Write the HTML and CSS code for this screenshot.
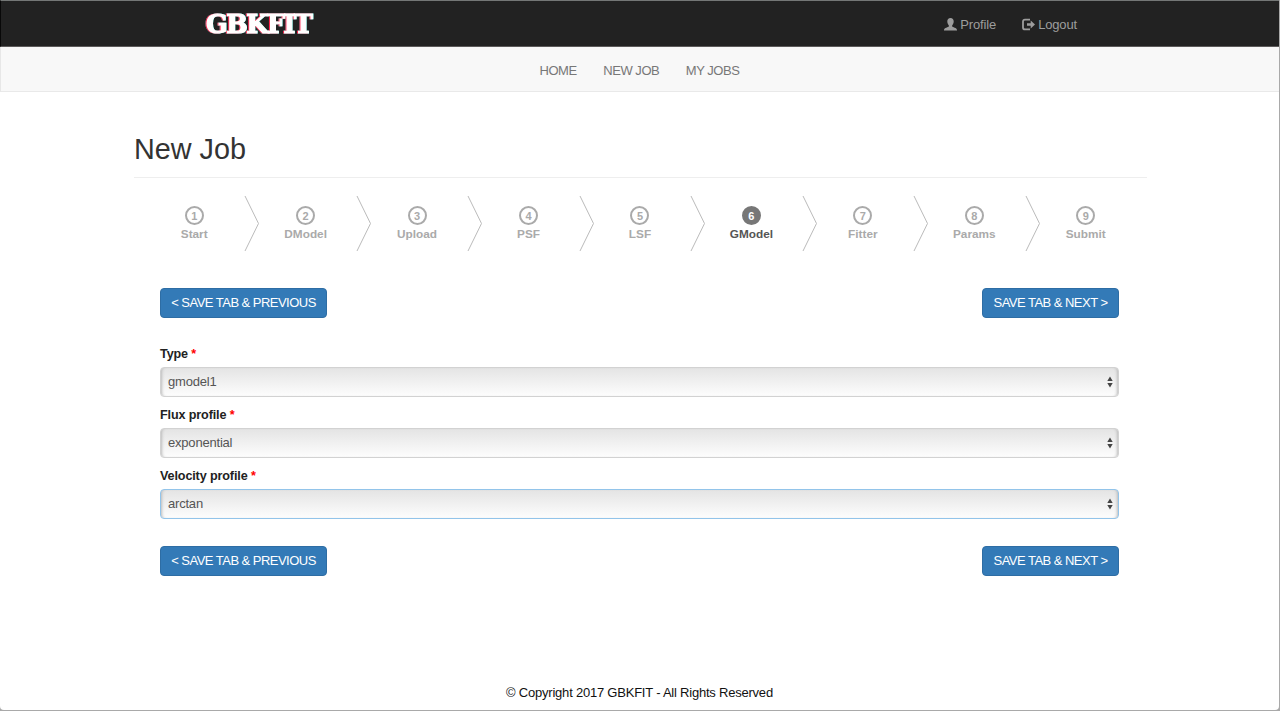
FILE: index.html
```html
<!DOCTYPE html>
<html lang="en">
<head>
<meta charset="utf-8">
<title>GBKFIT - New Job</title>
<link rel="stylesheet" href="styles.css">
</head>
<body>
<div class="page">
  <header class="topbar">
    <a class="brand">GBKFIT</a>
    <nav class="account">
      <a class="account-link"><svg class="icon" viewBox="0 0 13 13"><path d="M6.5 0C4.500 0 3.300 1.400 3.300 3.200c0 1.700.6 3.200 1.500 4.100v1.300C4.600 9.500 0 9.700 0 12V12.500h13V12c0-2.300-4.600-2.500-4.800-3.400V7.300c.9-.9 1.500-2.400 1.500-4.100C9.700 1.400 8.500 0 6.500 0z"/></svg><span class="profile-text">Profile</span></a>
      <a class="account-link"><svg class="icon" viewBox="0 0 13 13"><path d="M8 1.600H3Q1 1.600 1 3.600v5.800q0 2 2 2h5" fill="none" stroke="currentColor" stroke-width="1.800"/><path d="M5 5.300h3.700V2.600L13 6.500l-4.300 3.900V7.700H5z"/></svg><span class="logout-text">Logout</span></a>
    </nav>
  </header>
  <nav class="mainnav"><a class="nav-home">HOME</a><a class="nav-new">NEW JOB</a><a class="nav-jobs">MY JOBS</a></nav>
  <main class="content">
    <h1 class="title">New Job</h1>
    <ol class="steps">
      <li class="step"><span class="num">1</span><span>Start</span><svg class="chevron" viewBox="0 0 16 57"><path d="M1 1l13.500 27.500L1 56"/></svg></li>
      <li class="step"><span class="num">2</span><span>DModel</span><svg class="chevron" viewBox="0 0 16 57"><path d="M1 1l13.500 27.500L1 56"/></svg></li>
      <li class="step"><span class="num">3</span><span>Upload</span><svg class="chevron" viewBox="0 0 16 57"><path d="M1 1l13.500 27.500L1 56"/></svg></li>
      <li class="step"><span class="num">4</span><span>PSF</span><svg class="chevron" viewBox="0 0 16 57"><path d="M1 1l13.500 27.500L1 56"/></svg></li>
      <li class="step"><span class="num">5</span><span>LSF</span><svg class="chevron" viewBox="0 0 16 57"><path d="M1 1l13.500 27.500L1 56"/></svg></li>
      <li class="step active"><span class="num">6</span><span>GModel</span><svg class="chevron" viewBox="0 0 16 57"><path d="M1 1l13.500 27.500L1 56"/></svg></li>
      <li class="step"><span class="num">7</span><span>Fitter</span><svg class="chevron" viewBox="0 0 16 57"><path d="M1 1l13.500 27.500L1 56"/></svg></li>
      <li class="step"><span class="num">8</span><span>Params</span><svg class="chevron" viewBox="0 0 16 57"><path d="M1 1l13.500 27.500L1 56"/></svg></li>
      <li class="step"><span class="num">9</span><span>Submit</span></li>
    </ol>
    <form class="form">
      <div class="actions"><button type="button" class="btn prev">&lt; SAVE TAB &amp; PREVIOUS</button><button type="button" class="btn next">SAVE TAB &amp; NEXT &gt;</button></div>
      <div class="fields">
        <div class="field"><div class="label">Type <span class="required">*</span></div><div class="select"><span>gmodel1</span><svg class="arrows" viewBox="0 0 6 12"><path d="M3 .5L5.700 5H.3zM.3 7h5.400L3 11.500z"/></svg></div></div>
        <div class="field"><div class="label">Flux profile <span class="required">*</span></div><div class="select"><span>exponential</span><svg class="arrows" viewBox="0 0 6 12"><path d="M3 .5L5.700 5H.3zM.3 7h5.400L3 11.500z"/></svg></div></div>
        <div class="field"><div class="label">Velocity profile <span class="required">*</span></div><div class="select focused"><span>arctan</span><svg class="arrows" viewBox="0 0 6 12"><path d="M3 .5L5.700 5H.3zM.3 7h5.400L3 11.500z"/></svg></div></div>
      </div>
      <div class="actions"><button type="button" class="btn prev">&lt; SAVE TAB &amp; PREVIOUS</button><button type="button" class="btn next">SAVE TAB &amp; NEXT &gt;</button></div>
    </form>
  </main>
  <footer class="footer">© Copyright 2017 GBKFIT - All Rights Reserved</footer>
</div>
</body>
</html>
```
FILE: styles.css
```css
* { box-sizing: border-box; }
body {
  margin: 0;
  background: #a9a9a9;
  font-family: "Liberation Sans", Arial, sans-serif;
  font-size: 13px;
  line-height: 18px;
  color: #222;
}
.page {
  display: flex;
  flex-direction: column;
  width: 1279px;
  height: 710px;
  background: #fff;
  border-radius: 0 0 4px 4px;
  overflow: hidden;
}
.topbar {
  display: flex;
  align-items: center;
  justify-content: space-between;
  height: 47px;
  padding: 0 202px 0 206px;
  background: #222;
  border-top: 1px solid #747776;
  border-bottom: 1px solid #5c5a5a;
  border-left: 1px solid #080808;
  color: #9d9d9d;
}
.brand {
  padding-top: 1px;
  margin-left: -1px;
  font: bold 25.500px/45px "DejaVu Serif", serif;
  letter-spacing: -1.500px;
  color: #fff;
  -webkit-text-stroke: 1.200px #fff;
  filter: drop-shadow(-.7px 0 0 #ff1744) drop-shadow(.7px 0 0 #00e0c6);
}
.account { display: flex; gap: 26px; padding-top: 1px; }
.account-link { display: flex; align-items: center; gap: 3px; letter-spacing: -.15px; }
.icon { width: 13px; height: 13px; fill: currentColor; }
.profile-text, .logout-text { padding-top: 1px; }
.mainnav {
  display: flex;
  justify-content: center;
  gap: 26.500px;
  height: 45px;
  padding: 15px 1px 0 0;
  background: #f8f8f8;
  border-bottom: 1px solid #e9e9e9;
  border-left: 1px solid #e7e7e7;
  color: #777;
  letter-spacing: -.45px;
}
.content { width: 1013px; margin: 39px 0 0 134px; }
.title {
  margin: 0;
  height: 47px;
  font-size: 28.800px;
  line-height: 37px;
  font-weight: normal;
  color: #333;
  border-bottom: 1px solid #eee;
}
.steps {
  display: flex;
  margin: 17px 0 0;
  padding: 0 5.500px 0 4.500px;
  list-style: none;
}
.step {
  position: relative;
  flex: 1;
  display: flex;
  flex-direction: column;
  align-items: center;
  height: 57px;
  padding-top: 11px;
  font-size: 11.800px;
  line-height: 14px;
  font-weight: bold;
  color: #aaa;
}
.num {
  width: 19px;
  height: 19px;
  margin-bottom: 2px;
  border: 2px solid #aaa;
  border-radius: 50%;
  font-size: 11px;
  line-height: 16px;
  text-align: center;
}
.active { color: #555; }
.active .num { background: #777; border-color: #777; color: #fff; }
.chevron {
  position: absolute;
  top: 0;
  right: -10.500px;
  width: 16px;
  height: 57px;
  fill: none;
  stroke: #bbb;
}
.form { margin: 36px 28px 0 26px; }
.actions { display: flex; justify-content: space-between; }
.btn {
  height: 30px;
  padding: 0;
  border: 1px solid #2e6da4;
  border-radius: 4px;
  background: #337ab7;
  color: #fff;
  font: 13px/28px "Liberation Sans", Arial, sans-serif;
  letter-spacing: -.53px;
  white-space: nowrap;
}
.prev { width: 167px; }
.next { width: 137px; }
.fields { padding: 27px 0 26px; }
.field { height: 61.200px; }
.field:last-child { height: 52.600px; }
.label { height: 22px; font-weight: bold; font-size: 12.600px; letter-spacing: -.13px; }
.required { color: #f00; }
.select {
  display: flex;
  align-items: center;
  justify-content: space-between;
  height: 30px;
  padding: 0 5px 0 7px;
  border: 1px solid #d2d2d2;
  border-radius: 4px;
  background: linear-gradient(#e4e4e4, #fdfdfd);
  box-shadow: inset 3px 0 3px -2px #bbb, inset -3px 0 3px -2px #bbb;
  color: #555;
  letter-spacing: -.2px;
}
.focused { border-color: #92c4ea; }
.arrows { width: 6px; height: 12px; fill: #444; }
.footer { margin-top: auto; height: 26px; text-align: center; color: #111; letter-spacing: -.22px; }
```
